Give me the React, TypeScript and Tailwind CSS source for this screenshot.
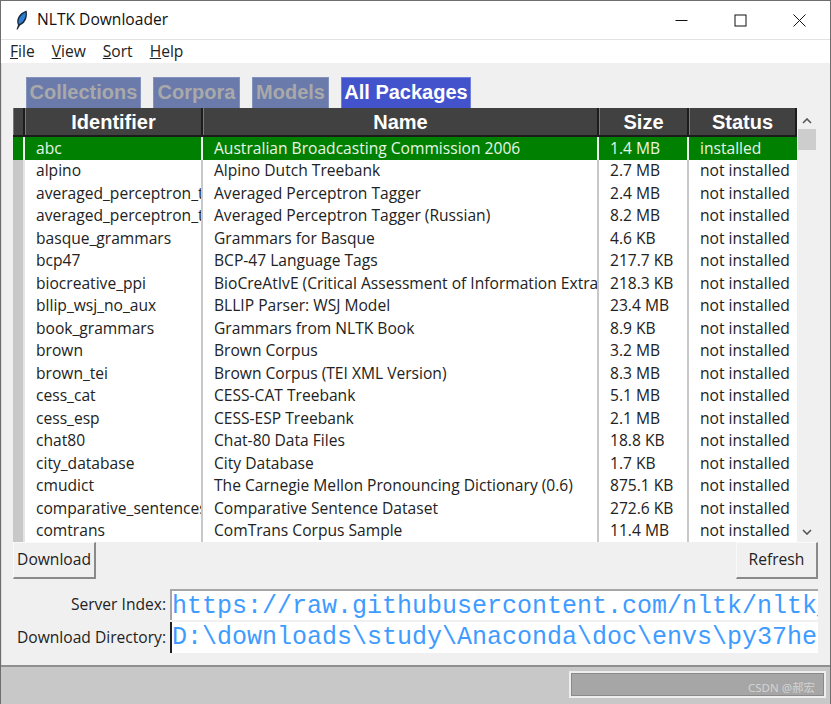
const rows = [
  ["abc", "Australian Broadcasting Commission 2006", "1.4 MB", "installed"],
  ["alpino", "Alpino Dutch Treebank", "2.7 MB", "not installed"],
  ["averaged_perceptron_tagger", "Averaged Perceptron Tagger", "2.4 MB", "not installed"],
  ["averaged_perceptron_tagger_ru", "Averaged Perceptron Tagger (Russian)", "8.2 MB", "not installed"],
  ["basque_grammars", "Grammars for Basque", "4.6 KB", "not installed"],
  ["bcp47", "BCP-47 Language Tags", "217.7 KB", "not installed"],
  ["biocreative_ppi", "BioCreAtIvE (Critical Assessment of Information Extraction)", "218.3 KB", "not installed"],
  ["bllip_wsj_no_aux", "BLLIP Parser: WSJ Model", "23.4 MB", "not installed"],
  ["book_grammars", "Grammars from NLTK Book", "8.9 KB", "not installed"],
  ["brown", "Brown Corpus", "3.2 MB", "not installed"],
  ["brown_tei", "Brown Corpus (TEI XML Version)", "8.3 MB", "not installed"],
  ["cess_cat", "CESS-CAT Treebank", "5.1 MB", "not installed"],
  ["cess_esp", "CESS-ESP Treebank", "2.1 MB", "not installed"],
  ["chat80", "Chat-80 Data Files", "18.8 KB", "not installed"],
  ["city_database", "City Database", "1.7 KB", "not installed"],
  ["cmudict", "The Carnegie Mellon Pronouncing Dictionary (0.6)", "875.1 KB", "not installed"],
  ["comparative_sentences", "Comparative Sentence Dataset", "272.6 KB", "not installed"],
  ["comtrans", "ComTrans Corpus Sample", "11.4 MB", "not installed"],
];

const tabs = [
  { label: "Collections", width: "w-[115px]" },
  { label: "Corpora", width: "w-[87px]" },
  { label: "Models", width: "w-[77px]" },
];

function HeaderCell({ label, width }: { label: string; width: string }) {
  return (
    <div className={`${width} flex h-full shrink-0 items-center justify-center border-r-2 border-[#1c1c1c] border-l border-l-[#777777] bg-[#414141] text-[20px] font-bold text-white`}>
      {label}
    </div>
  );
}

function Row({ row, index }: { row: string[]; index: number }) {
  const selected = index === 0;
  const text = selected ? "bg-[#008000] text-[#e8f5e8]" : "bg-white text-[#222222]";
  const cell = "flex h-full shrink-0 items-center overflow-hidden whitespace-nowrap border-r-2";
  const line = selected ? "border-[#f0f0f0]" : "border-[#c8c8c8]";
  return (
    <div className="flex h-[22.53px] w-full">
      <div className={`h-full w-[12px] shrink-0 border-r-2 ${selected ? "bg-[#008000] border-[#f0f0f0]" : "bg-[#c8c8c8] border-[#e4e4e4]"}`} />
      <div className={`${cell} ${text} ${line} w-[178px] pl-[11px]`}>{row[0]}</div>
      <div className={`${cell} ${text} ${line} w-[396px] pl-[11px]`}>{row[1]}</div>
      <div className={`${cell} ${text} ${line} w-[90px] pl-[11px]`}>{row[2]}</div>
      <div className={`flex h-full w-[108px] shrink-0 items-center overflow-hidden whitespace-nowrap pl-[11px] ${text}`}>{row[3]}</div>
    </div>
  );
}

export default function App() {
  return (
    <div className="flex h-[704px] w-[831px] flex-col overflow-hidden border-t border-r border-l border-[#6e6e6e] bg-white font-['Open_Sans','Noto_Sans',sans-serif] text-[15.6px] text-[#222222]">
      {/* title bar */}
      <div className="flex h-[39px] shrink-0 items-center border-b border-[#e2e2e2] pr-[24px] pl-[14px]">
        <svg viewBox="0 0 13 20" className="h-[20px] w-[13px]">
          <path d="M1.5 19.5 L3 15 C0.5 10 4 3 11.5 0.5 C13 6 11 13 5 15.5 L2.6 19.5 Z" fill="#1b2a3a" />
          <path d="M3.6 13.5 C3 9 6 4.5 10.5 2.5 C11.2 6.5 9.5 11 4.8 13.8 Z" fill="#2f7fd6" />
        </svg>
        <span className="ml-[9px] text-[#111111]">NLTK Downloader</span>
        <div className="ml-auto flex items-center gap-[46px]">
          <svg viewBox="0 0 13 13" className="h-[13px] w-[13px]">
            <path d="M0.5 6.5 H12.5" stroke="#111111" strokeWidth="1" fill="none" />
          </svg>
          <svg viewBox="0 0 13 13" className="h-[13px] w-[13px]">
            <rect x="1" y="1" width="11" height="11" stroke="#111111" strokeWidth="1" fill="none" />
          </svg>
          <svg viewBox="0 0 13 13" className="h-[13px] w-[13px]">
            <path d="M0.5 0.5 L12.5 12.5 M12.5 0.5 L0.5 12.5" stroke="#111111" strokeWidth="1" fill="none" />
          </svg>
        </div>
      </div>

      {/* menu */}
      <div className="flex h-[23px] shrink-0 items-center gap-[17px] pl-[9px]">
        <span><u>F</u>ile</span>
        <span><u>V</u>iew</span>
        <span><u>S</u>ort</span>
        <span><u>H</u>elp</span>
      </div>

      {/* body */}
      <div className="flex min-h-0 flex-1 flex-col border-l border-[#dddddd] bg-[#f0f0f0] pt-[14px] pl-[11px]">
        <div className="flex h-[31px] shrink-0 gap-[12px] pl-[13px] font-['Liberation_Sans',sans-serif] text-[20px] font-bold">
          {tabs.map((tab) => (
            <div key={tab.label} className={`${tab.width} flex items-center justify-center border-x border-t border-[#8493bd] bg-[#6a7aab] pb-[2px] text-[#a9a9a9]`}>
              {tab.label}
            </div>
          ))}
          <div className="flex w-[130px] items-center justify-center border-x border-t border-[#7280dc] bg-[#4353cb] pb-[2px] text-white">All Packages</div>
        </div>

        <div className="flex h-[434px] shrink-0">
          <div className="flex w-[784px] shrink-0 flex-col">
            <div className="flex h-[29px] shrink-0 border-b-2 border-[#1c1c1c] font-['Liberation_Sans',sans-serif]">
              <HeaderCell label="" width="w-[12px]" />
              <HeaderCell label="Identifier" width="w-[178px]" />
              <HeaderCell label="Name" width="w-[396px]" />
              <HeaderCell label="Size" width="w-[90px]" />
              <HeaderCell label="Status" width="w-[108px]" />
            </div>
            <div className="min-h-0 flex-1 overflow-hidden">
              {rows.map((row, i) => (
                <Row key={row[0]} row={row} index={i} />
              ))}
            </div>
          </div>
          <div className="flex w-[20px] shrink-0 flex-col items-center">
            <svg viewBox="0 0 10 6" className="mt-[10px] h-[6px] w-[10px]">
              <path d="M1 5 L5 1 L9 5" stroke="#555555" strokeWidth="1.6" fill="none" />
            </svg>
            <div className="mt-[5px] h-[21px] w-[18px] bg-[#cdcdcd]" />
            <svg viewBox="0 0 10 6" className="mt-auto mb-[7px] h-[6px] w-[10px]">
              <path d="M1 1 L5 5 L9 1" stroke="#555555" strokeWidth="1.6" fill="none" />
            </svg>
          </div>
        </div>

        <div className="flex shrink-0 justify-between pr-[12px]">
          <div className="flex h-[37px] w-[83px] items-center justify-center border-t border-l border-t-[#fafafa] border-l-[#fafafa] border-r-2 border-b-2 border-r-[#8a8a8a] border-b-[#8a8a8a]">
            Download
          </div>
          <div className="flex h-[37px] w-[82px] items-center justify-center border-t border-l border-t-[#fafafa] border-l-[#fafafa] border-r-2 border-b-2 border-r-[#8a8a8a] border-b-[#8a8a8a]">
            Refresh
          </div>
        </div>

        <div className="mt-[10px] flex shrink-0 flex-col gap-[2px] pr-[12px]">
          <div className="flex h-[31px] items-center">
            <div className="w-[155px] shrink-0 pr-[2px] text-right whitespace-nowrap">Server Index:</div>
            <div className="ml-[2px] flex h-full min-w-0 flex-1 items-center overflow-hidden border-t-2 border-l-2 border-t-[#a6a6a6] border-l-[#a6a6a6] bg-white pt-[2px] font-['Liberation_Mono',monospace] text-[25px] whitespace-nowrap text-[#3f9cff]">
              https://raw.githubusercontent.com/nltk/nltk_data
            </div>
          </div>
          <div className="flex h-[31px] items-center">
            <div className="w-[155px] shrink-0 pr-[2px] text-right whitespace-nowrap">Download Directory:</div>
            <div className="ml-[2px] flex h-full min-w-0 flex-1 items-center overflow-hidden border-l-2 border-l-[#202020] bg-white pt-[1px] font-['Liberation_Mono',monospace] text-[25px] whitespace-nowrap text-[#3f9cff]">
              D:\downloads\study\Anaconda\doc\envs\py37hello
            </div>
          </div>
        </div>
      </div>

      {/* status bar */}
      <div className="flex h-[39px] shrink-0 justify-end border-t-2 border-[#8f8f8f] bg-[#c8c8c8] pt-[4px] pr-[4px]">
        <div className="flex h-[27px] w-[257px] items-end justify-end border-2 border-[#eeeeee] bg-[#a6a6a6] pr-[9px] text-[11.5px] leading-[16px] text-[#d4d4d4] outline outline-[#8a8a8a] -outline-offset-3">
          <span className="font-['Noto_Sans','Noto_Sans_CJK_SC',sans-serif]">CSDN @郝宏</span>
        </div>
      </div>
    </div>
  );
}
